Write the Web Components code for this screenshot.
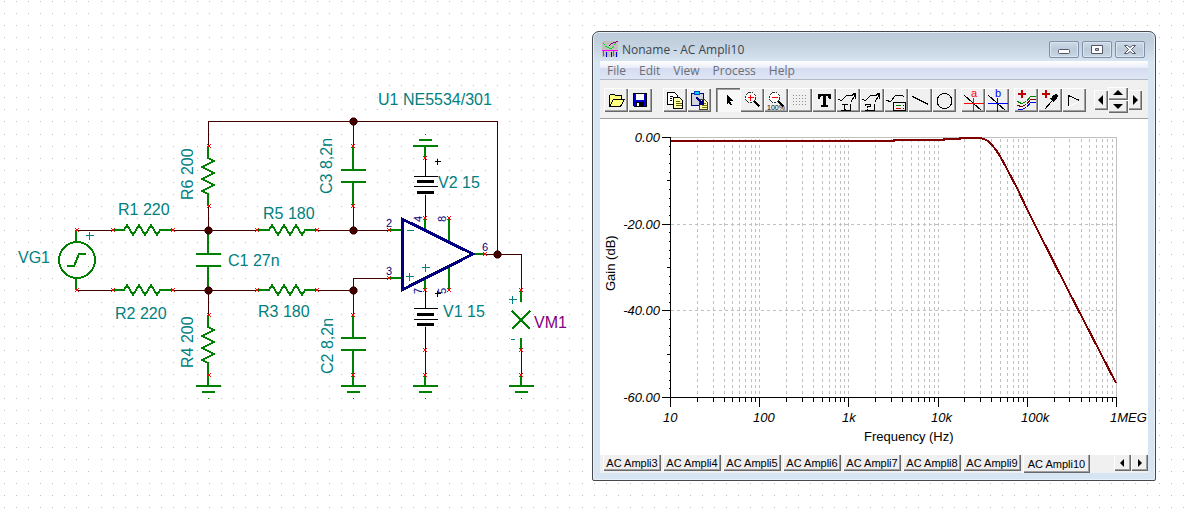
<!DOCTYPE html>
<html lang="en">
<head>
<meta charset="utf-8">
<title>Noname - AC Ampli10</title>
<style>
html,body{margin:0;background:#fff}
body{font-family:"Liberation Sans",Arial,sans-serif;color:#000}
</style>
</head>
<body>
<circuit-desktop>
  <circuit-schematic slot="schematic"></circuit-schematic>
  <diagram-window slot="diagram">
    <window-title slot="title">Noname - AC Ampli10</window-title>
    <menu-bar slot="menu" items="File,Edit,View,Process,Help"></menu-bar>
    <tool-bar slot="tools"></tool-bar>
    <bode-chart slot="chart"></bode-chart>
    <sheet-tabs slot="tabs" items="AC Ampli3,AC Ampli4,AC Ampli5,AC Ampli6,AC Ampli7,AC Ampli8,AC Ampli9,AC Ampli10"></sheet-tabs>
  </diagram-window>
</circuit-desktop>
<script>
const define = (name, render) => customElements.define(name, class extends HTMLElement {
  connectedCallback() {
    if (this.shadowRoot) return;
    this.attachShadow({mode: 'open'}).innerHTML = render(this);
  }
});

/* Desktop: dotted drawing sheet behind, schematic on the left, diagram window on the right */
define('circuit-desktop', () => {
  let d = '';
  for (let j = 0; j < 90; j++) for (let i = 0; i < 180; i++)
    d += `M${Math.round(4.3 + i * 12.025)} ${Math.round(1.1 + j * 12.04)}h1v1h-1z`;
  return `<style>
    :host{display:grid;grid-template-columns:592px minmax(0,1fr);position:relative;min-height:100vh;overflow:hidden;align-items:start}
    .dots{position:absolute;inset:0;width:100%;height:100%}
    ::slotted(*){position:relative}
    ::slotted(diagram-window){margin:31px 36px 31px 0}
  </style>
  <svg class="dots" aria-hidden="true"><path d="${d}" fill="#c0c0c0" shape-rendering="crispEdges"/></svg>
  <slot name="schematic"></slot><slot name="diagram"></slot>`;
});

define('circuit-schematic', () => {
  const hz = (x, y) => `M${x} ${y}h11l3 -5l6 10l6 -10l6 10l6 -10l6 10l3 -5h12`;
  const vt = (x, y) => `M${x} ${y}v12l6 3l-12 6l12 6l-12 6l12 6l-12 6l6 3v12`;
  const gnd = x => `M${x} 375v11m-12 0h25m-19 6h13`;
  const cap = (x, y0, y1, y2, y3) => `M${x} ${y0}V${y1}M${x - 12} ${y1}h25M${x - 12} ${y2}h25M${x} ${y2}V${y3}`;
  const pins = [[77,230],[113,230],[173,230],[257,230],[317,230],[77,290],[113,290],[173,290],[257,290],[317,290],[209,146],[209,206],[209,315],[209,375],
    [353,146],[353,206],[353,315],[353,375],[389,230],[389,278],[425,218],[449,218],[425,290],[449,290],[485,254],[425,158],[425,350],[425,375],[521,290],[521,350],[521,375]];
  const cross = ([x, y]) => [[-2,-2],[-1,-1],[0,-1],[1,-2],[-1,0],[0,0],[-2,1],[1,1]].map(([a, b]) => `M${x + a} ${y + b}h1v1h-1z`).join('');
  const dots = [[208,230],[208,290],[353,121],[353,230],[353,290],[497,254]];
  const plus = (x, y, r) => `M${x - r} ${y}h${2 * r}M${x} ${y - r}v${2 * r}`;
  const rot = (x, y, t) => `<text transform="translate(${x} ${y}) rotate(-90)">${t}</text>`;
  return `<style>
    :host{display:block}
    svg{display:block;width:100%;height:auto}
    .l{fill:none;shape-rendering:crispEdges}
    .names{font-size:16px;fill:#008080}
    .pins{font-size:11px;fill:#000080}
  </style>
  <svg viewBox="0 0 592 420" role="img" aria-label="Filter circuit">
    <g transform="translate(.5 .5)">
    <path class="l" stroke="#400000" d="M76 230H113M173 230H257M317 230H389M76 290H113M173 290H257M317 290H353M208 146V121H497V254M208 206V230M208 290V315M353 121V146M353 206V230M389 278H353V315M485 254H521V290M521 350V375M425 350V375"/>
    </g>
    <path class="l" stroke="#008000" stroke-width="2" d="${hz(113,230)}${hz(113,290)}${hz(258,230)}${hz(258,290)}${vt(208,146)}${vt(208,315)}${cap(208,230,254,266,290)}${cap(353,146,170,182,206)}${cap(353,315,338,350,375)}${gnd(208)}${gnd(353)}${gnd(425)}${gnd(521)}
      M425 158V146M413 146h25M419 140h13M76 230v12M76 278v12M389 230h13M389 278h13M425 218v13M449 218v24M425 278v12M449 266v24M473 254h12M521 290v12M521 338v12M512 311l18 18m0 -18l-18 18M67 266h7l5 -12h7"/>
    <circle cx="77" cy="260" r="18" fill="none" stroke="#008000" stroke-width="2" shape-rendering="crispEdges"/>
    <path fill="#008000" shape-rendering="crispEdges" d="M208 398h1v1h-1zM353 398h1v1h-1zM425 398h1v1h-1zM521 398h1v1h-1zM425 134h1v1h-1z"/>
    <path class="l" stroke="#000080" stroke-width="3" d="M402 219V290L473 254Z"/>
    <g transform="translate(.5 .5)">
      <path class="l" stroke="#000" d="M425 158V176M413 176h24M413 186h24M425 194V218M425 290V308M413 308h24M413 319h24M425 326V350${plus(437,161,3)}${plus(437,293,3)}"/>
      <path class="l" stroke="#008080" d="${plus(89,235,4)}M406 230h7${plus(409,276,4)}${plus(425,267,4)}${plus(512,299,4)}M510 339h4"/>
    </g>
    <path fill="#f00" shape-rendering="crispEdges" d="${pins.map(cross).join('')}"/>
    <path d="M417 180h17v3h-17zM417 191h17v3h-17zM417 313h17v3h-17zM417 323h17v3h-17z"/>
    <g fill="#400000">${dots.map(([x,y]) => `<path d="M${x - 1} ${y - 3}h3l2 2v3l-2 2h-3l-2 -2v-3z" stroke="#400000"/>`).join('')}</g>
    <g class="names">
      <text x="118" y="215">R1 220</text><text x="115" y="319">R2 220</text><text x="263" y="219">R5 180</text><text x="258" y="317">R3 180</text>
      <text x="18" y="263">VG1</text><text x="228" y="266">C1 27n</text><text x="378" y="105">U1 NE5534/301</text>
      <text x="438" y="188">V2 15</text><text x="443" y="317">V1 15</text><text x="534" y="328" fill="#800080">VM1</text>
      ${rot(193,200,'R6 200')}${rot(193,368,'R4 200')}${rot(332,194,'C3 8,2n')}${rot(333,374,'C2 8,2n')}
    </g>
    <g class="pins"><text x="386" y="227">2</text><text x="386" y="275">3</text><text x="482" y="251">6</text>
      ${rot(422,222,'4')}${rot(446,222,'8')}${rot(422,294,'7')}${rot(446,294,'5')}</g>
  </svg>`;
});

define('diagram-window', () => `<style>
  :host{display:block;box-sizing:border-box;border:1px solid #45484d;border-radius:7px 7px 2px 2px;background:linear-gradient(#bccad9,#c5d3e1 14px,#d7e4f2 30px);padding:0 7px 7px;box-shadow:inset 0 0 0 1px #e8f1fa}
  main{background:#fff}
</style>
<slot name="title"></slot><slot name="menu"></slot><slot name="tools"></slot><main><slot name="chart"></slot></main><slot name="tabs"></slot>`);

define('window-title', () => `<style>
  :host{display:flex;align-items:center;height:29px;padding:0 3px 0 2px;gap:3px;font:12px "Open Sans","Segoe UI",sans-serif;color:#3c4650}
  .name{flex:1;margin-left:1px;padding-top:6px}
  .logo{margin-top:5px}
  button{width:30px;height:17px;padding:0;margin-top:6px;border:1px solid #8091a7;border-radius:2px;background:linear-gradient(#cfdae6,#bccada 50%,#c9d6e4);box-shadow:inset 0 0 0 1px #dbe5ef}
  svg{display:block}
  button svg{margin:auto}
</style>
<svg class="logo" width="16" height="16" shape-rendering="crispEdges"><path fill="#c0c0c0" d="M0 0h16v16H0z"/><path fill="#800080" d="M14 0h2v1h-2zM11 1h3v1h-3zM9 2h2v1h-2zM8 3h1v1h-1zM7 4h1v1h-1z"/><path fill="#00e000" d="M1 2h1v1h-1zM2 3h1v1h-1zM3 5h2v1h-2zM5 6h2v1h-2zM7 7h3v1h-3zM10 6h1v1h-1zM11 5h1v1h-1zM12 3h1v1h-1zM13 2h1v1h-1z"/><path fill="#f0f" d="M0 9h16v1H0zM1 10h1v5h-1zM11 10h1v5h-1z"/><path fill="#0000e0" d="M4 11h1v5h-1zM9 11h1v5h-1zM14 11h1v5h-1z"/></svg>
<span class="name"><slot></slot></span>
<button aria-label="Minimize"><svg width="12" height="10"><rect x=".5" y="4.500" width="11" height="4" rx="1" fill="#fff" stroke="#535666"/></svg></button>
<button aria-label="Maximize"><svg width="12" height="10"><path fill="#fff" stroke="#535666" fill-rule="evenodd" d="M.500 .500h11v8h-11zM4.500 3.500v2h3v-2z"/></svg></button>
<button aria-label="Close"><svg width="12" height="10"><path fill="#fff" stroke="#535666" d="M.500 .500h3l2.500 2l2.500 -2h3l-4 4l4 4h-3l-2.500 -2l-2.500 2h-3l4 -4z"/></svg></button>`);

define('menu-bar', el => `<style>
  :host{display:flex;height:18px;padding-left:7px;gap:13px;background:linear-gradient(#fff,#e9edf8 7px,#d5dcf0 7px,#dfe6f6);border-bottom:1px solid #b3b8c4}
  button{border:0;background:none;padding:0;font:12px/20px "Open Sans","Segoe UI",sans-serif;color:#6b6f78}
</style>${el.getAttribute('items').split(',').map(t => `<button>${t}</button>`).join('')}`);

const stroke = (d, c = '#000', w = 1) => `<path d="${d}" stroke="${c}" stroke-width="${w}" transform="translate(.5 .5)"/>`;
const fill = (d, c = '#000') => `<path d="${d}" fill="${c}"/>`;
const lens = c => `<circle cx="10.500" cy="9.500" r="5" fill="#fff" stroke="#333" stroke-dasharray="2 1"/>` + stroke('M7 9h6M10 6v6', c);
const curve = stroke('M2 11l3 1l5 -5h5l4 -3');
const icons = {
  Open: `<path d="M5.500 18.500v-11l1 -1h4l1 1h6v4h3l-4 7z" fill="#ffff80" stroke="#000"/>` + stroke('M5 18l4 -7h8'),
  Save: `<path d="M5.500 5.500h13v13h-12l-1 -1z" fill="#0000d0" stroke="#000"/>` + fill('M8 6h8v6H8z', '#fff') + fill('M8 14h8v5H8z') + fill('M9 15h2v3H9z', '#fff'),
  Copy: `<path d="M4.500 4.500h7l3 3v9h-10z" fill="#fff" stroke="#000"/><path d="M10.500 9.500h6l3 3v8h-9z" fill="#ffffb0" stroke="#000"/>` + stroke('M6 8h3M6 10h2M6 12h2') + stroke('M12 13h4M12 15h6M12 17h6', '#606000'),
  Paste: `<path d="M4.500 5.500h12v12h-12z" fill="#d4d4dc" stroke="#000080"/><path d="M7.500 3.500h5v3h-5z" fill="#00d0ff" stroke="#0040c0"/><path d="M12.500 11.500h5l3 3v7h-8z" fill="#ffffb0" stroke="#404040"/>` + stroke('M14 15h4M14 17h5M14 19h5', '#808000') + stroke('M9 9l6 6m0 -4v4h-4', '#000080', 2),
  Select: fill('M11 7l6 6h-3l2 4h-2l-1 -3l-2 2z'),
  'Zoom in': lens('#f00') + stroke('M14 13l5 5', '#000', 2),
  'Zoom 100%': lens('#f00').replace('M10 6v6', '') + stroke('M14 13l5 5', '#000', 2) + '<text x="3" y="22" font-size="7" fill="#000">100%</text>',
  Grid: Array.from({length: 20}, (_, i) => fill(`M${5 + i % 5 * 3} ${7 + (i / 5 | 0) * 3}h1v1h-1z`, '#909090')).join(''),
  Text: fill('M6 6h13v5h-2l-1 -3h-2v9h2v2H9v-2h2V8H9l-1 3H6z'),
  'Text label': curve + stroke('M14 14l5 -8m-4 1l4 -2v5M14 15v7H4') + stroke('M5 16h6M8 16v5M7 21h2', '#000', 1),
  'Auto label': curve + stroke('M14 14l5 -8m-4 1l4 -2v5M14 15v7H4') + stroke('M5 17v-1h5v2h-3v1M7 20v1', '#000', 1),
  Legend: stroke('M2 12l4 1l5 -6h6l3 1M9 14h12v8H9z') + stroke('M11 17h5', '#008000') + stroke('M11 20h5', '#d00000') + stroke('M18 17h1M18 20h1'),
  Line: stroke('M4 8l16 8'),
  Ellipse: '<circle cx="12.500" cy="13" r="7.500" stroke="#000"/>',
  'Cursor a': stroke('M3 7l17 15') + stroke('M2 15h20M12 9v14', '#f00') + '<text x="10" y="9" font-size="11" fill="#f00">a</text>',
  'Cursor b': stroke('M3 7l17 15') + stroke('M2 15h20M12 9v14', '#00f') + '<text x="10" y="9" font-size="11" fill="#00f">b</text>',
  'Add curves': stroke('M3 13l4 2l5 -2l4 -5h5', '#008000') + stroke('M3 17l4 1l5 -2l4 -5h5', '#800000') + stroke('M3 21l4 0l5 -2l4 -5h5', '#00f') + stroke('M3 5h8M7 1v8', '#c00000', 2),
  'Pick curve': stroke('M6 21l8 -9') + fill('M12 10l4 5l1 -3l2 -1l1 -3l-2 -2l-3 1l-1 3z') + stroke('M3 5h8M7 1v8', '#c00000', 2),
  Marker: stroke('M6 18V7l11 5') + stroke('M6 18l11 -5', '#fff')
};
const tri = {left: 'M9 5v10L4 10z', right: 'M5 5v10L10 10z', up: 'M10 3L15 8H5z', down: 'M5 4h10l-5 5z'};

define('tool-bar', () => {
  const groups = [['Open','Save'],['Copy','Paste'],['Select','Zoom in','Zoom 100%','Grid','Text','Text label','Auto label','Legend','Line','Ellipse'],['Cursor a','Cursor b'],['Add curves','Pick curve','Marker']];
  const btn = n => `<button aria-label="${n}" class="${n === 'Select' ? 'on' : ''}"><svg viewBox="0 0 24 24" fill="none" shape-rendering="crispEdges">${icons[n]}</svg></button>`;
  return `<style>
    :host{display:flex;align-items:center;gap:5px;padding:2px 0 0 4px;background:#f0f0f0;border-bottom:1px solid #a0a0a0;box-sizing:border-box;height:39px}
    div{display:flex;flex:none}
    div:nth-of-type(1){margin-right:6px}
    button{width:24px;height:24px;padding:0;border:0;background:#f0f0f0;box-shadow:inset 1px 1px #fff,inset -1px -1px #696969,inset -2px -2px #a0a0a0}
    button.on{background:#f8f8f8;box-shadow:inset 1px 1px #696969,inset 2px 2px #a0a0a0}
    svg{display:block;width:100%;height:100%}
    text{font-family:"Liberation Sans",sans-serif}
    .move{margin-left:3px;align-items:center}
    .move button{width:14px;height:20px}
    .move span{display:grid}
    .move span button{width:20px;height:13px}
  </style>${groups.map(g => `<div>${g.map(btn).join('')}</div>`).join('')}
  <div class="move"><button aria-label="Left"><svg viewBox="0 0 14 20">${fill(tri.left)}</svg></button>
  <span><button aria-label="Up"><svg viewBox="0 0 20 13">${fill(tri.up)}</svg></button><button aria-label="Down"><svg viewBox="0 0 20 13">${fill(tri.down)}</svg></button></span>
  <button aria-label="Right"><svg viewBox="0 0 14 20">${fill(tri.right)}</svg></button></div>`;
});

/* Bode plot: five decades from 10 Hz, 0 to -60 dB */
define('bode-chart', () => {
  let grid = 'M670 224H1116M670 310H1116', ticks = '';
  for (let k = 0; k <= 5; k++) for (let m = 1; m < 10; m++) {
    const x = Math.round(670 + 89.2 * (k + Math.log10(m)));
    if (x > 1116) continue;
    if (x > 670 && x < 1116) grid += `M${x} 138V397`;
    ticks += `M${x} 397v${m === 1 ? 9 : 4}`;
  }
  for (let i = 0; i <= 30; i++) ticks += `M670 ${Math.round(137 + i * 26 / 3)}h${i % 10 === 0 ? -9 : i % 5 === 0 ? -4 : -2}`;
  const xs = [[663,'10'],[753,'100'],[842,'1k'],[931,'10k'],[1021,'100k'],[1110,'1MEG']];
  const ys = [[142,'0.00'],[229,'-20.00'],[315,'-40.00'],[402,'-60.00']];
  return `<style>
    :host{display:block}
    svg{display:block;width:100%;height:auto;font-size:13px}
    .l{fill:none;shape-rendering:crispEdges}
  </style>
  <svg viewBox="600 119 548 336" role="img" aria-label="Gain over frequency">
    <g class="l" transform="translate(.5 .5)">
      <path d="${grid}" stroke="#c0c0c0" stroke-dasharray="3 3"/>
      <path d="M670 137H1116V397" stroke="#c0c0c0"/>
      <path d="M670 137V397H1116${ticks}" stroke="#000"/>
    </g>
    <path class="l" stroke="#800000" stroke-width="2" d="M671 141H894V140H944V139H960V138H980L984 139L988 141L992 145L996 150L1000 156L1007 169L1017 188L1027 209L1035 225L1068 290L1116 383"/>
    <g font-style="italic">${xs.map(([x,t]) => `<text x="${x}" y="422">${t}</text>`).join('')}${ys.map(([y,t]) => `<text x="660" y="${y}" text-anchor="end">${t}</text>`).join('')}</g>
    <text x="864" y="441">Frequency (Hz)</text>
    <text transform="translate(615 291) rotate(-90)">Gain (dB)</text>
  </svg>`;
});

define('sheet-tabs', el => {
  const items = el.getAttribute('items').split(',');
  return `<style>
    :host{display:flex;align-items:flex-start;height:18px;padding-left:3px;gap:2px;background:#f0f0f0}
    button{border:0;padding:0;background:#f0f0f0;color:#000;height:16px;width:58px;font:11px/14px "Liberation Sans",sans-serif;white-space:nowrap;box-shadow:inset 1px 0 #fff,inset -1px -1px #696969,inset -2px -2px #a0a0a0}
    button[aria-selected=true]{width:67px;height:18px;line-height:18px}
    nav{display:flex;margin-left:auto}
    nav button{width:17px}
    svg{display:block}
  </style>${items.map((t, i) => `<button role="tab" aria-selected="${i === items.length - 1}">${t}</button>`).join('')}
  <nav><button aria-label="Previous"><svg width="17" height="16"><path d="M10 4v8L6 8z"/></svg></button><button aria-label="Next"><svg width="17" height="16"><path d="M7 4v8l4 -4z"/></svg></button></nav>`;
});
</script>
</body>
</html>
